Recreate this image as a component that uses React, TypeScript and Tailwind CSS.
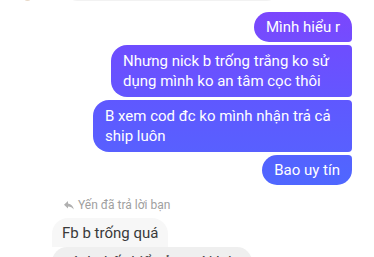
import React from "react";

const font = { fontFamily: "Roboto, 'Noto Sans', sans-serif" };

function Mine({ lines, cls }: { lines: string[]; cls: string }) {
    return (
        <div className="flex justify-end">
            <div className={`px-3 py-[5px] whitespace-nowrap text-[15px] leading-[20px] text-white ${cls}`}>
                {lines.map((l, i) => (
                    <div key={i}>{l}</div>
                ))}
            </div>
        </div>
    );
}

export default function App() {
    return (
        <div className="w-[374px] h-[257px] overflow-hidden bg-white" style={font}>
            {/* tail of the previous incoming message */}
            <div className="flex items-end gap-[32px] pl-[24px] -mt-[29px]">
                <div className="w-[7px] h-[30px] rounded-full bg-[#e8d9c8]" />
                <div className="w-[218px] h-[30px] rounded-[16px] bg-[#f2f2f2]" />
            </div>

            <div className="flex flex-col gap-[3px] pr-[22px] pt-[11px]">
                <Mine
                    lines={["Mình hiểu r"]}
                    cls="rounded-[16px] rounded-br-[4px] bg-gradient-to-b from-[#7b46fd] to-[#734dfe]"
                />
                <Mine
                    lines={["Nhưng nick b trống trắng ko sử", "dụng mình ko an tâm cọc thôi"]}
                    cls="min-w-[241px] py-[6px] rounded-l-[16px] rounded-r-[4px] bg-gradient-to-b from-[#6e4dff] to-[#6456ff]"
                />
                <Mine
                    lines={["B xem cod đc ko mình nhận trả cả", "ship luôn"]}
                    cls="min-w-[259px] py-[6px] rounded-l-[16px] rounded-r-[4px] bg-gradient-to-b from-[#5f58ff] to-[#5860ff]"
                />
                <Mine
                    lines={["Bao uy tín"]}
                    cls="rounded-[16px] rounded-tr-[4px] bg-gradient-to-b from-[#5462ff] to-[#4f67ff]"
                />
            </div>

            <div className="pl-[52px] pt-[12px]">
                <div className="flex items-center gap-[4px] pl-[12px] text-[12px] leading-[16px] text-[#a0a0a0]">
                    <svg width="10" height="9" viewBox="0 0 10 9" fill="#b0b0b0">
                        <path d="M4 0 L0 3.8 L4 7.6 V5.4 C6.5 5.4 8.3 6.2 9.8 8.6 C9.3 5.2 7.3 2.8 4 2.4 Z" />
                    </svg>
                    <span>Yến đã trả lời bạn</span>
                </div>
                <div className="flex flex-col items-start mt-[5px]">
                    <div className="px-[10px] pt-[5px] pb-[4px] whitespace-nowrap text-[15px] leading-[20px] text-[#3a3a3a] rounded-t-[16px] bg-[#f7f7f7]">
                        Fb b trống quá
                    </div>
                    <div className="w-[200px] px-[10px] py-[5px] whitespace-nowrap overflow-hidden text-[15px] leading-[20px] text-[#3a3a3a] rounded-[16px] bg-[#efefef]">
                        mình thấy hiểu ở ngoài lại sợ
                    </div>
                </div>
            </div>
        </div>
    );
}
